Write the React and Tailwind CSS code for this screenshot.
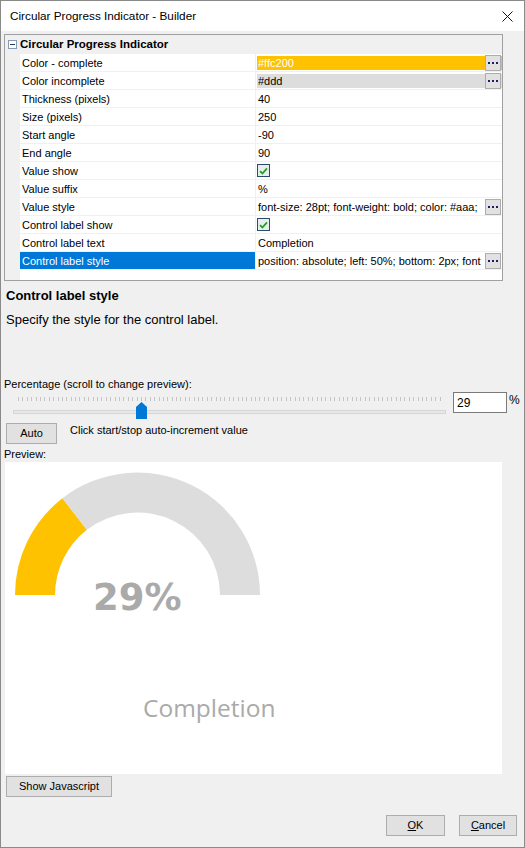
import React from "react";

const rows = [
  { name: "Color - complete", kind: "color", value: "#ffc200", bg: "bg-[#ffc200]", fg: "text-white" },
  { name: "Color incomplete", kind: "color", value: "#ddd", bg: "bg-[#dddddd]", fg: "text-black" },
  { name: "Thickness (pixels)", value: "40" },
  { name: "Size (pixels)", value: "250" },
  { name: "Start angle", value: "-90" },
  { name: "End angle", value: "90" },
  { name: "Value show", kind: "check" },
  { name: "Value suffix", value: "%" },
  { name: "Value style", kind: "more", value: "font-size: 28pt; font-weight: bold; color: #aaa;" },
  { name: "Control label show", kind: "check" },
  { name: "Control label text", value: "Completion" },
  { name: "Control label style", kind: "more", value: "position: absolute; left: 50%; bottom: 2px; font", selected: true },
];

function Dots() {
  return (
    <div className="absolute right-[1px] top-[1px] w-[16px] h-[16px] bg-[#e1e1e1] border border-[#adadad] flex items-center justify-center gap-[2px]">
      <span className="w-[2px] h-[2px] bg-[#1c1c6e]" />
      <span className="w-[2px] h-[2px] bg-[#1c1c6e]" />
      <span className="w-[2px] h-[2px] bg-[#1c1c6e]" />
    </div>
  );
}

function Check() {
  return (
    <div className="w-[13px] h-[13px] border border-[#2b4a6d] bg-[#e8eef0] flex items-center justify-center">
      <svg width="9" height="8" viewBox="0 0 9 8">
        <path d="M1 4.2 L3.4 6.5 L8 1.3" fill="none" stroke="#21a121" strokeWidth="1.8" />
      </svg>
    </div>
  );
}

function Row({ r }) {
  return (
    <div className="flex h-[18px]">
      <div className="w-[15px] bg-[#f0f0f0]" />
      <div className={`w-[235px] pl-[2px] pt-[1px] flex items-center border-b border-[#f0f0f0] ${r.selected ? "bg-[#0078d7] text-white" : ""}`}>
        {r.name}
      </div>
      <div className="w-[1px] bg-[#f0f0f0]" />
      <div className="flex-1 relative border-b border-[#f0f0f0] overflow-hidden">
        {r.kind === "color" && (
          <div className={`absolute left-[1px] right-0 top-[2px] h-[14px] ${r.bg} ${r.fg} pl-[1px] pt-[1px] flex items-center`}>{r.value}</div>
        )}
        {r.kind === "check" && (
          <div className="h-full flex items-center pl-[1px]"><Check /></div>
        )}
        {(r.kind === undefined || r.kind === "more") && (
          <div className="h-full flex items-center pl-[2px] pt-[1px] whitespace-nowrap">{r.value}</div>
        )}
        {(r.kind === "color" || r.kind === "more") && <Dots />}
      </div>
    </div>
  );
}

function Button({ children, className }) {
  return (
    <div className={`h-[21px] bg-[#e1e1e1] border border-[#adadad] flex items-center justify-center ${className}`}>
      {children}
    </div>
  );
}

export default function App() {
  const ticks = Array.from({ length: 97 });
  return (
    <div className="w-[525px] h-[848px] bg-[#f0f0f0] border border-[#8a8a8a] flex flex-col font-['Liberation_Sans',Arial,sans-serif] text-[11px] text-black overflow-hidden">
      {/* title bar */}
      <div className="h-[30px] bg-white flex items-center justify-between pl-[9px] pr-[11px] shrink-0">
        <span className="text-[11.75px]">Circular Progress Indicator - Builder</span>
        <svg width="11" height="11" viewBox="0 0 11 11">
          <path d="M0.5 0.5 L10.5 10.5 M10.5 0.5 L0.5 10.5" stroke="#111" strokeWidth="1" />
        </svg>
      </div>

      {/* property grid */}
      <div className="ml-[3px] mt-[3px] w-[499px] h-[247px] border border-[#a0a0a0] bg-white flex flex-col shrink-0">
        <div className="h-[19px] bg-[#f0f0f0] flex items-center">
          <div className="w-[15px] flex items-center justify-center">
            <div className="w-[9px] h-[9px] border border-[#8a9bb0] bg-white flex items-center justify-center">
              <div className="w-[5px] h-[1px] bg-[#1f3a66]" />
            </div>
          </div>
          <span className="font-bold text-[11.5px] pt-[1px]">Circular Progress Indicator</span>
        </div>
        {rows.map((r) => (
          <Row key={r.name} r={r} />
        ))}
        <div className="flex flex-1">
          <div className="w-[15px] bg-[#f0f0f0]" />
          <div className="flex-1" />
        </div>
      </div>

      {/* description */}
      <div className="pl-[5px] mt-[7px] font-bold text-[13px] leading-[16px]">Control label style</div>
      <div className="pl-[5px] mt-[8px] text-[13px] leading-[16px]">Specify the style for the control label.</div>

      {/* percentage */}
      <div className="pl-[3px] mt-[49px] leading-[14px]">Percentage (scroll to change preview):</div>
      <div className="flex mt-[1px] h-[28px]">
        <div className="relative ml-[12px] w-[433px] h-full">
          <div className="absolute left-[5px] right-[5px] top-[5px] h-[4px] flex justify-between">
            {ticks.map((_, i) => (
              <span key={i} className="w-[1px] h-[4px] bg-[#c4c4c4]" />
            ))}
          </div>
          <div className="absolute left-0 right-0 top-[18px] h-[4px] bg-[#e7e7e7] border border-[#d6d6d6]" />
          <svg className="absolute left-[123px] top-[10px]" width="11" height="17" viewBox="0 0 11 17">
            <path d="M0 5 L5.5 0 L11 5 L11 17 L0 17 Z" fill="#0078d7" />
          </svg>
        </div>
        <div className="ml-[7px] w-[54px] h-[21px] bg-white border border-[#7a7a7a] flex items-center pl-[3px] text-[12px]">29</div>
        <span className="ml-[2px] -mt-[1px] text-[12px]">%</span>
      </div>
      <div className="flex items-center mt-[3px]">
        <Button className="ml-[5px] w-[51px]">Auto</Button>
        <span className="ml-[13px] -mt-[6px]">Click start/stop auto-increment value</span>
      </div>

      {/* preview */}
      <div className="pl-[3px] mt-[3px] leading-[14px]">Preview:</div>
      <div className="relative ml-[4px] mt-[1px] w-[497px] h-[312px] bg-white shrink-0">
        <svg className="absolute left-0 top-0" width="265" height="140" viewBox="0 0 265 140">
          <path d="M10 133 A122.5 122.5 0 0 1 57.42 36.2 L81.94 67.81 A82.5 82.5 0 0 0 50 133 Z" fill="#ffc200" />
          <path d="M57.42 36.2 A122.5 122.5 0 0 1 255 133 L215 133 A82.5 82.5 0 0 0 81.94 67.81 Z" fill="#dddddd" />
        </svg>
        <div className="absolute left-[88px] top-[114px] font-['DejaVu_Sans',sans-serif] font-bold text-[37px] leading-[44px] text-[#aaaaaa]">29%</div>
        <div className="absolute left-[138px] top-[229px] font-['Open_Sans',sans-serif] text-[24.5px] leading-[34px] text-[#aaaaaa]">Completion</div>
      </div>

      <Button className="ml-[5px] mt-[2px] w-[106px]">Show Javascript</Button>

      <div className="flex justify-end mt-[18px] pr-[7px] gap-[14px]">
        <Button className="w-[59px]"><span className="underline">O</span>K</Button>
        <Button className="w-[58px]"><span className="underline">C</span>ancel</Button>
      </div>
    </div>
  );
}
